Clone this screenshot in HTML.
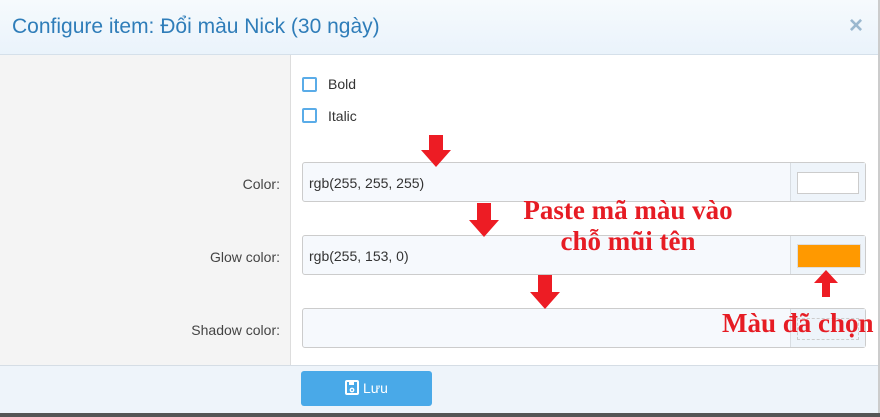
<!DOCTYPE html><html><head><meta charset="utf-8"><style>
body{margin:0;width:880px;height:417px;position:relative;overflow:hidden;background:#fff;font-family:"Liberation Sans",sans-serif}
.a{position:absolute}
.hdr{left:0;top:0;width:878px;height:54px;background:linear-gradient(#f6fafd,#eaf3fb);border-bottom:1px solid #d5e0ea}
.inp{left:302px;width:562px;height:38px;border:1px solid #ccc;border-radius:3px;background:#f6f9fd}
.add{position:absolute;right:0;top:0;width:74px;height:38px;border-left:1px solid #d8dde2;background:#eef4fa}
.lbl{right:600px;font-size:14px;color:#444;text-align:right}
.txt{font-size:14px;color:#333}
.red{color:#e61c24;font-family:"Liberation Serif",serif;font-weight:bold;font-size:27px;white-space:nowrap}
.cb{width:11px;height:11px;border:2px solid #5aace8;border-radius:2px}
</style></head><body>
<div class="a hdr"></div>
<div class="a" style="left:12px;top:15px;font-size:21px;color:#2f7db9">Configure item: Đổi màu Nick (30 ngày)</div>
<div class="a" style="left:849px;top:12px;font-size:24px;color:#9bb8cf;font-weight:bold">×</div>
<div class="a" style="left:0;top:55px;width:290px;height:310px;background:#f4f4f4;border-right:1px solid #ddd"></div>
<div class="a" style="left:878px;top:0;width:2px;height:417px;background:#ccc"></div>
<div class="a cb" style="left:302px;top:77px"></div><div class="a txt" style="left:328px;top:76px">Bold</div>
<div class="a cb" style="left:302px;top:108px"></div><div class="a txt" style="left:328px;top:108px">Italic</div>
<div class="a lbl" style="top:176px">Color:</div>
<div class="a lbl" style="top:249px">Glow color:</div>
<div class="a lbl" style="top:322px">Shadow color:</div>
<div class="a inp" style="top:162px"><div class="a txt" style="left:6px;top:12px">rgb(255, 255, 255)</div><div class="add"><div class="a" style="left:6px;top:9px;width:60px;height:20px;background:#fff;border:1px solid #ccc"></div></div></div>
<div class="a inp" style="top:235px"><div class="a txt" style="left:6px;top:12px">rgb(255, 153, 0)</div><div class="add"><div class="a" style="left:6px;top:8px;width:62px;height:22px;background:#ff9900;border:1px solid #ddd"></div></div></div>
<div class="a inp" style="top:308px"><div class="add"><div class="a" style="left:6px;top:9px;width:60px;height:20px;border:1px dashed #ccc"></div></div></div>
<div class="a" style="left:0;top:365px;width:878px;height:48px;background:#eef4fa;border-top:1px solid #d5dde5"></div>
<div class="a" style="left:0;top:413px;width:880px;height:4px;background:#555"></div>
<div class="a" style="left:301px;top:371px;width:131px;height:35px;background:#49a9e8;border-radius:3px;color:#fff;font-size:14px;line-height:35px;text-align:center">
<svg width="14" height="15" viewBox="0 0 14 15" style="vertical-align:-2px"><rect x="1" y="1" width="12" height="13" rx="1" fill="none" stroke="#fff" stroke-width="2"/><rect x="4" y="1" width="5" height="4" fill="#fff"/><circle cx="7" cy="10" r="1.7" fill="none" stroke="#fff" stroke-width="1.4"/></svg> Lưu</div>
<svg class="a" style="left:0;top:0" width="880" height="417">
<g fill="#ed1c24">
<polygon points="429,135 443,135 443,150 451,150 436,167 421,150 429,150"/>
<polygon points="477,203 491,203 491,220 499,220 484,237 469,220 477,220"/>
<polygon points="538,275 552,275 552,292 560,292 545,309 530,292 538,292"/>
<polygon points="826,270 838,283 830,283 830,297 822,297 822,283 814,283"/>
</g></svg>
<div class="a red" style="left:480px;top:195px;width:296px;text-align:center">Paste mã màu vào</div>
<div class="a red" style="left:480px;top:226px;width:296px;text-align:center">chỗ mũi tên</div>
<div class="a red" style="left:722px;top:308px">Màu đã chọn</div>
</body></html>
